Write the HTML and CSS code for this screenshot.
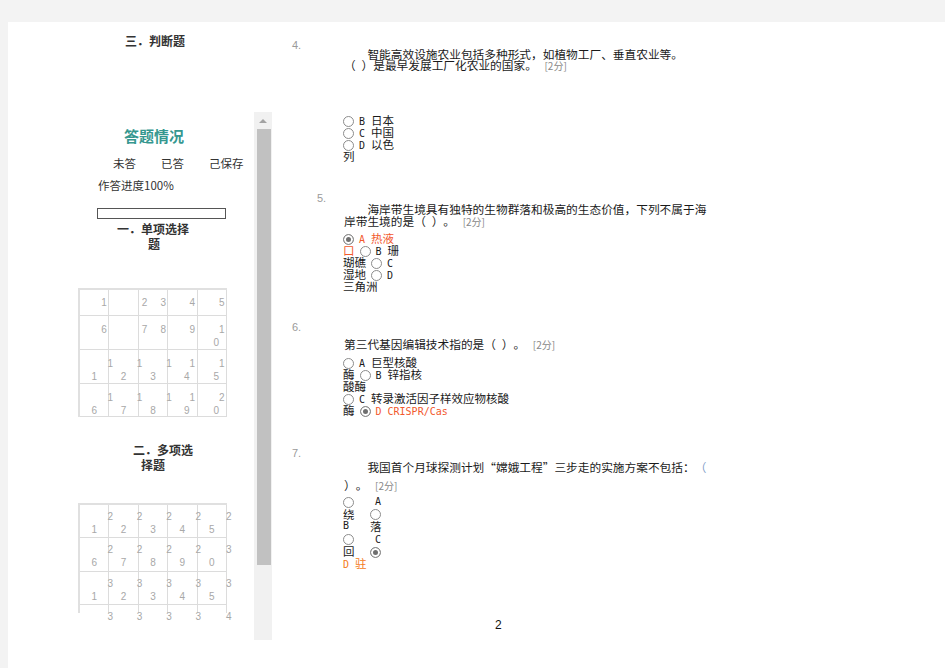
FILE: index.html
```html
<!DOCTYPE html>
<html lang="zh-CN">
<head>
  <meta charset="utf-8">
  <title>答题</title>
  <link rel="stylesheet" href="styles.css">
</head>
<body>
  <div class="page">
    <div class="side">
      <div class="side-title">三．判断题</div>

      <div class="panel">
        <div class="panel-body">
          <div class="sum-title">答题情况</div>
          <div class="legend"><span>未答</span><span>已答</span><span>己保存</span></div>
          <div class="progress-text">作答进度100%</div>
          <div class="progress"></div>

          <div class="group-title g1"><div>一．单项选择</div><div class="l2">题</div></div>
          <div class="cells one">
            <div class="cell"><div class="d r">1</div></div>
            <div class="cell"></div>
            <div class="cell"><div class="d sb"><span>2</span><span>3</span></div></div>
            <div class="cell"><div class="d r">4</div></div>
            <div class="cell"><div class="d r">5</div></div>

            <div class="cell"><div class="d r">6</div></div>
            <div class="cell"></div>
            <div class="cell"><div class="d sb"><span>7</span><span>8</span></div></div>
            <div class="cell"><div class="d r">9</div></div>
            <div class="cell"><div class="d r">1</div><div class="d rr">0</div></div>

            <div class="cell"><div class="d"></div><div class="d c">1</div></div>
            <div class="cell"><div class="d"><span class="lf">1</span></div><div class="d c">2</div></div>
            <div class="cell"><div class="d"><span class="lf">1</span></div><div class="d c">3</div></div>
            <div class="cell"><div class="d sb0"><span class="lf">1</span><span>1</span></div><div class="d rr">4</div></div>
            <div class="cell"><div class="d r">1</div><div class="d rr">5</div></div>

            <div class="cell"><div class="d"></div><div class="d c">6</div></div>
            <div class="cell"><div class="d"><span class="lf">1</span></div><div class="d c">7</div></div>
            <div class="cell"><div class="d"><span class="lf">1</span></div><div class="d c">8</div></div>
            <div class="cell"><div class="d sb0"><span class="lf">1</span><span>1</span></div><div class="d rr">9</div></div>
            <div class="cell"><div class="d r">2</div><div class="d rr">0</div></div>
          </div>

          <div class="group-title g2"><div>二．多项选</div><div class="l2">择题</div></div>
          <div class="cells two">
            <div class="cell"><div class="d"></div><div class="d c">1</div></div>
            <div class="cell"><div class="d"><span class="lf">2</span></div><div class="d c">2</div></div>
            <div class="cell"><div class="d"><span class="lf">2</span></div><div class="d c">3</div></div>
            <div class="cell"><div class="d"><span class="lf">2</span></div><div class="d c">4</div></div>
            <div class="cell"><div class="d sb0"><span class="lf">2</span><span class="rt">2</span></div><div class="d c">5</div></div>

            <div class="cell"><div class="d"></div><div class="d c">6</div></div>
            <div class="cell"><div class="d"><span class="lf">2</span></div><div class="d c">7</div></div>
            <div class="cell"><div class="d"><span class="lf">2</span></div><div class="d c">8</div></div>
            <div class="cell"><div class="d"><span class="lf">2</span></div><div class="d c">9</div></div>
            <div class="cell"><div class="d sb0"><span class="lf">2</span><span class="rt">3</span></div><div class="d c">0</div></div>

            <div class="cell"><div class="d"></div><div class="d c">1</div></div>
            <div class="cell"><div class="d"><span class="lf">3</span></div><div class="d c">2</div></div>
            <div class="cell"><div class="d"><span class="lf">3</span></div><div class="d c">3</div></div>
            <div class="cell"><div class="d"><span class="lf">3</span></div><div class="d c">4</div></div>
            <div class="cell"><div class="d sb0"><span class="lf">3</span><span class="rt">3</span></div><div class="d c">5</div></div>

            <div class="cell last"><div class="d"></div></div>
            <div class="cell last"><div class="d"><span class="lf">3</span></div></div>
            <div class="cell last"><div class="d"><span class="lf">3</span></div></div>
            <div class="cell last"><div class="d"><span class="lf">3</span></div></div>
            <div class="cell last"><div class="d sb0"><span class="lf">3</span><span class="rt">4</span></div></div>
          </div>
        </div>

        <div class="scrollbar">
          <div class="sb-up"><span class="tri"></span></div>
          <div class="sb-thumb"></div>
        </div>
      </div>
    </div>

    <div class="main">
      <div class="q q4">
        <div class="qno">4.</div>
        <div class="qtext">
          <div class="ln ind">智能高效设施农业包括多种形式，如植物工厂、垂直农业等。</div>
          <div class="ln">（&ensp;）是最早发展工厂化农业的国家。 <span class="score">[2分]</span></div>
        </div>
        <div class="opts">
          <div class="ln"><span class="rd"></span><span class="k">B </span>日本</div>
          <div class="ln"><span class="rd"></span><span class="k">C </span>中国</div>
          <div class="ln"><span class="rd"></span><span class="k">D </span>以色</div>
          <div class="ln">列</div>
        </div>
      </div>

      <div class="q q5">
        <div class="qno">5.</div>
        <div class="qtext">
          <div class="ln ind">海岸带生境具有独特的生物群落和极高的生态价值，下列不属于海</div>
          <div class="ln">岸带生境的是（&ensp;）。 <span class="score">[2分]</span></div>
        </div>
        <div class="opts">
          <div class="ln"><span class="rd on"></span><span class="pick"><span class="k">A </span>热液</span></div>
          <div class="ln"><span class="pick">口</span><span class="rd m"></span><span class="k">B </span>珊</div>
          <div class="ln">瑚礁<span class="rd m"></span><span class="k">C</span></div>
          <div class="ln">湿地<span class="rd m"></span><span class="k">D</span></div>
          <div class="ln">三角洲</div>
        </div>
      </div>

      <div class="q q6">
        <div class="qno">6.</div>
        <div class="qtext">
          <div class="ln">第三代基因编辑技术指的是（&ensp;）。 <span class="score">[2分]</span></div>
        </div>
        <div class="opts">
          <div class="ln"><span class="rd"></span><span class="k">A </span>巨型核酸</div>
          <div class="ln">酶<span class="rd m"></span><span class="k">B </span>锌指核</div>
          <div class="ln">酸酶</div>
          <div class="ln"><span class="rd"></span><span class="k">C </span>转录激活因子样效应物核酸</div>
          <div class="ln">酶<span class="rd m on"></span><span class="pick"><span class="k">D CRISPR/Cas</span></span></div>
        </div>
      </div>

      <div class="q q7">
        <div class="qno">7.</div>
        <div class="qtext">
          <div class="ln ind">我国首个月球探测计划“嫦娥工程”三步走的实施方案不包括：<span class="blue">（</span></div>
          <div class="ln">）。 <span class="score">[2分]</span></div>
        </div>
        <div class="opts grid7">
          <div><span class="rd"></span></div><div class="k pad low">A</div>
          <div>绕</div><div><span class="rd"></span></div>
          <div class="k">B</div><div>落</div>
          <div><span class="rd"></span></div><div class="k pad low">C</div>
          <div>回</div><div><span class="rd on"></span></div>
          <div class="wide pick2"><span class="k">D </span>驻</div>
        </div>
      </div>

      <div class="pageno">2</div>
    </div>
  </div>
</body>
</html>
```

FILE: styles.css
```css
body {
  margin: 0;
  background: #f3f3f3;
  font-family: "Noto Sans CJK SC", sans-serif;
  color: #222;
  text-spacing-trim: space-all;
}

.page {
  margin: 22px 0 0 8px;
  height: 646px;
  background: #fff;
  display: flex;
  overflow: hidden;
}

/* left column */
.side {
  width: 264px;
  flex-shrink: 0;
}
.side-title {
  padding: 11px 0 0 117px;
  font-size: 12px;
  line-height: 16px;
  font-weight: bold;
  color: #333;
}
.panel {
  margin-top: 63px;
  height: 528px;
  display: flex;
}
.panel-body {
  width: 246px;
  font-size: 11.5px;
  color: #333;
}
.sum-title {
  margin: 14px 0 0 116px;
  font-size: 15px;
  line-height: 20px;
  font-weight: bold;
  color: #35978f;
}
.legend {
  margin: 9px 0 0 105px;
  display: flex;
  gap: 25px;
  line-height: 16px;
}
.progress-text {
  margin: 6px 0 0 90px;
  line-height: 16px;
}
.progress {
  margin: 15px 0 0 89px;
  width: 127px;
  height: 9px;
  border: 1px solid #555;
}
.group-title {
  font-size: 12px;
  line-height: 15px;
  font-weight: bold;
  color: #333;
}
.g1 {
  margin: 2px 0 0 109px;
}
.g1 .l2 {
  padding-left: 31px;
}
.g2 {
  margin: 25px 0 0 125px;
}
.g2 .l2 {
  padding-left: 8px;
}

.cells {
  display: grid;
  grid-template-columns: repeat(5, 29.4px);
  width: max-content;
  margin-left: 70px;
  border-left: 2px solid #e0e0e0;
  border-top: 2px solid #e0e0e0;
  font-family: "Liberation Sans", Arial, sans-serif;
  font-size: 10px;
  color: #a8a8a8;
}
.cells.one {
  margin-top: 37px;
  grid-template-rows: 26px 34px 34px 33px;
}
.cells.two {
  margin-top: 31px;
  grid-template-rows: 33px 34px 33px 8px;
}
.cell {
  box-sizing: border-box;
  border-right: 1px solid #dcdcdc;
  border-bottom: 1px solid #dcdcdc;
  padding-top: 7px;
}
.cells.one .cell:nth-child(-n+5) {
  padding-top: 6px;
}
.cells.two .cell {
  padding-top: 5px;
}
.cell.last {
  border-bottom: none;
}
.d {
  display: flex;
  height: 13px;
  line-height: 13px;
  white-space: nowrap;
}
.d.r {
  justify-content: flex-end;
  padding-right: 1.5px;
}
.d.rr {
  justify-content: flex-end;
  padding-right: 7px;
}
.d.c {
  justify-content: center;
}
.d.sb {
  justify-content: space-between;
  padding: 0 1px 0 3px;
}
.d.sb0 {
  justify-content: space-between;
  padding-right: 1.5px;
}
.lf {
  margin-left: -2px;
}
.rt {
  margin-right: -7px;
}

.scrollbar {
  width: 18px;
  background: #f1f1f1;
}
.sb-up {
  height: 17px;
  display: flex;
  justify-content: center;
  align-items: center;
}
.tri {
  width: 0;
  height: 0;
  border-left: 4px solid transparent;
  border-right: 4px solid transparent;
  border-bottom: 4px solid #a3a3a3;
}
.sb-thumb {
  margin-left: 3px;
  width: 14px;
  height: 436px;
  background: #c1c1c1;
}

/* questions */
.main {
  flex: 1;
  padding-top: 18px;
}
.qno {
  margin-left: 20px;
  height: 10px;
  font-family: "Liberation Sans", Arial, sans-serif;
  font-size: 11px;
  line-height: 10px;
  color: #9a9a9a;
}
.q5 .qno {
  margin-left: 45px;
}
.qtext {
  margin-left: 72px;
  font-size: 11.7px;
  color: #1a1a1a;
}
.ln {
  white-space: nowrap;
}
.ind {
  text-indent: 2em;
}
.score {
  margin-left: 5px;
  font-size: 10px;
  line-height: 10px;
  color: #888;
}
.blue {
  color: #7f9cc8;
}
.opts {
  margin-left: 71px;
  font-size: 11.5px;
  line-height: 12px;
  color: #1a1a1a;
}
.opts .ln {
  height: 12px;
}
.k {
  font-family: "DejaVu Sans Mono", monospace;
  font-size: 10px;
}
.rd {
  display: inline-block;
  box-sizing: border-box;
  width: 11px;
  height: 11px;
  margin-right: 5px;
  border: 1px solid #8c8c8c;
  border-radius: 50%;
  background: #fff;
  vertical-align: -2px;
}
.rd.m {
  margin-left: 5px;
}
.rd.on {
  background: #6f6f6f;
  box-shadow: inset 0 0 0 2px #fff;
}
.pick {
  color: #f2582c;
}
.pick2 {
  color: #f47a20;
}

.q4 .qtext {
  margin-top: -2px;
  line-height: 11px;
}
.q4 .qtext .ln {
  height: 11px;
}
.q4 .opts {
  margin-top: 44px;
}
.q5 {
  margin-top: 31px;
}
.q5 .qtext {
  margin-top: 0;
  line-height: 12px;
}
.q5 .qtext .ln,
.q6 .qtext .ln {
  height: 12px;
}
.q5 .opts {
  margin-top: 5px;
}
.q6 {
  margin-top: 30.4px;
}
.q6 .qtext {
  margin-top: 6px;
  line-height: 12px;
}
.q6 .opts {
  margin-top: 6px;
}
.q7 {
  margin-top: 31.4px;
}
.q7 .qtext {
  margin-top: 0;
  line-height: 18px;
}
.q7 .qtext .ln {
  height: 18px;
}
.q7 .opts {
  margin-top: 1px;
}
.grid7 {
  display: grid;
  grid-template-columns: 27px 27px;
  grid-auto-rows: 12.5px;
  align-items: center;
}
.grid7 .rd {
  margin-right: 0;
}
.grid7 .pad {
  padding-left: 5px;
}
.grid7 .low {
  padding-top: 2px;
}
.grid7 .wide {
  grid-column: span 2;
}

.pageno {
  margin: 48px 0 0 223px;
  font-family: "Liberation Sans", Arial, sans-serif;
  font-size: 12px;
  line-height: 14px;
  color: #111;
}
```
